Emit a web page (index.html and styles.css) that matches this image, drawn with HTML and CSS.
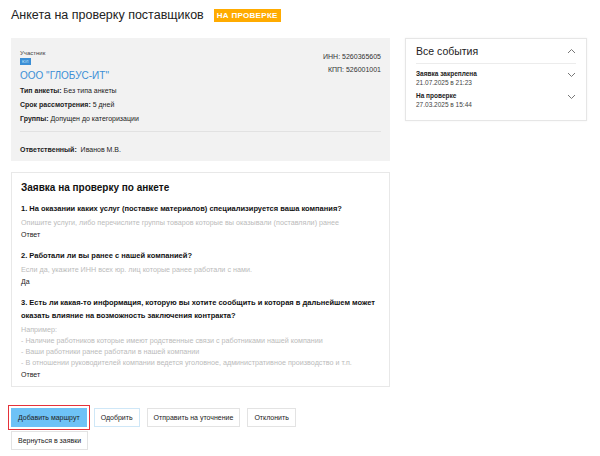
FILE: index.html
```html
<!DOCTYPE html>
<html lang="ru">
<head>
    <meta charset="UTF-8">
    <meta name="viewport" content="width=device-width, initial-scale=1.0">
    <title>Анкета на проверку поставщиков</title>
    <link rel="stylesheet" href="styles.css">
</head>
<body>
    <div class="header">
        <h1>Анкета на проверку поставщиков</h1>
        <span class="status-badge">НА ПРОВЕРКЕ</span>
    </div>

    <div class="layout">
        <div class="main">
            <div class="supplier-card">
                <div class="supplier-top">
                    <div>
                        <div class="label-small">Участник</div>
                        <span class="type-badge">ЮЛ</span>
                        <div class="company-name">ООО "ГЛОБУС-ИТ"</div>
                    </div>
                    <div class="requisites">
                        <div>ИНН: 5260365605</div>
                        <div>КПП: 526001001</div>
                    </div>
                </div>
                <div class="info-row"><b>Тип анкеты:</b> Без типа анкеты</div>
                <div class="info-row"><b>Срок рассмотрения:</b> 5 дней</div>
                <div class="info-row"><b>Группы:</b> Допущен до категоризации</div>
                <div class="responsible"><b>Ответственный:</b>&nbsp; Иванов М.В.</div>
            </div>

            <div class="questions-card">
                <h2>Заявка на проверку по анкете</h2>

                <div class="question">
                    <div class="question-title">1. На оказании каких услуг (поставке материалов) специализируется ваша компания?</div>
                    <div class="question-hint">Опишите услуги, либо перечислите группы товаров которые вы оказывали (поставляли) ранее</div>
                    <div class="question-answer">Ответ</div>
                </div>

                <div class="question">
                    <div class="question-title">2. Работали ли вы ранее с нашей компанией?</div>
                    <div class="question-hint">Если да, укажите ИНН всех юр. лиц которые ранее работали с нами.</div>
                    <div class="question-answer">Да</div>
                </div>

                <div class="question">
                    <div class="question-title">3. Есть ли какая-то информация, которую вы хотите сообщить и которая в дальнейшем может оказать влияние на возможность заключения контракта?</div>
                    <div class="question-hint">
                        Например:<br>
                        - Наличие работников которые имеют родственные связи с работниками нашей компании<br>
                        - Ваши работники ранее работали в нашей компании<br>
                        - В отношении руководителей компании ведется уголовное, административное производство и т.п.
                    </div>
                    <div class="question-answer">Ответ</div>
                </div>
            </div>
        </div>

        <div class="events-card">
            <div class="events-header">
                <span>Все события</span>
                <svg class="chevron" width="9" height="6" viewBox="0 0 9 6"><path d="M1 5 L4.5 1.5 L8 5" fill="none" stroke="#777" stroke-width="1"/></svg>
            </div>
            <div class="event">
                <div>
                    <div class="event-title">Заявка закреплена</div>
                    <div class="event-date">21.07.2025 в 21:23</div>
                </div>
                <svg class="chevron" width="9" height="6" viewBox="0 0 9 6"><path d="M1 1 L4.5 4.5 L8 1" fill="none" stroke="#777" stroke-width="1"/></svg>
            </div>
            <div class="event">
                <div>
                    <div class="event-title">На проверке</div>
                    <div class="event-date">27.03.2025 в 15:44</div>
                </div>
                <svg class="chevron" width="9" height="6" viewBox="0 0 9 6"><path d="M1 1 L4.5 4.5 L8 1" fill="none" stroke="#777" stroke-width="1"/></svg>
            </div>
        </div>
    </div>

    <div class="actions">
        <span class="highlight"><button class="btn btn-primary">Добавить маршрут</button></span>
        <button class="btn btn-approve">Одобрить</button>
        <button class="btn">Отправить на уточнение</button>
        <button class="btn">Отклонить</button>
        <button class="btn">Вернуться в заявки</button>
    </div>
</body>
</html>
```

FILE: styles.css
```css
body {
    font-family: "Liberation Sans", Arial, sans-serif;
    margin: 0;
    padding: 0 11px;
    background-color: #fff;
    color: #222;
    font-size: 7px;
}

.header {
    display: flex;
    align-items: center;
    gap: 10px;
    height: 30px;
}

h1 {
    font-size: 12.5px;
    font-weight: normal;
    margin: 0;
    color: #222;
}

.status-badge {
    background-color: #ffab00;
    color: #fff;
    font-weight: bold;
    font-size: 8px;
    letter-spacing: 0.3px;
    padding: 2px 3px;
}

.layout {
    display: flex;
    gap: 15px;
    margin-top: 8px;
    align-items: flex-start;
}

.main {
    width: 379px;
}

.supplier-card {
    background-color: #f2f2f2;
    padding: 12px 9px 7px;
}

.supplier-top {
    display: flex;
    justify-content: space-between;
}

.label-small {
    font-size: 6px;
    color: #444;
}

.type-badge {
    display: inline-block;
    background-color: #3b8fd6;
    color: #cfe6fa;
    font-size: 4px;
    padding: 1px 2px;
    margin-top: 2px;
}

.company-name {
    color: #3b8fd6;
    font-size: 10px;
    margin-top: 5px;
}

.requisites {
    text-align: right;
    color: #333;
    line-height: 13px;
}

.info-row {
    margin-top: 6px;
    line-height: 8px;
}

.info-row:first-of-type {
    margin-top: 4px;
}

.responsible {
    border-top: 1px solid #e2e2e2;
    margin-top: 8px;
    padding-top: 14px;
    line-height: 8px;
}

.questions-card {
    margin-top: 11px;
    border: 1px solid #e8e8e8;
    padding: 9px 9px 5px;
}

h2 {
    font-size: 10px;
    margin: 0 0 9px;
    color: #111;
}

.question {
    margin-bottom: 8px;
}

.question:last-child {
    margin-bottom: 0;
}

.question-title {
    font-weight: bold;
    font-size: 7.5px;
    line-height: 13px;
    color: #111;
}

.question-hint {
    color: #bbb;
    font-size: 7.2px;
    line-height: 11px;
    margin-top: 2px;
}

.question-answer {
    margin-top: 1px;
    line-height: 12px;
}

.events-card {
    width: 160px;
    border: 1px solid #e6e6e6;
    box-shadow: 0 0 2px rgba(0, 0, 0, 0.06);
    padding: 0 10px 6px;
}

.events-header {
    display: flex;
    justify-content: space-between;
    align-items: center;
    font-size: 10.5px;
    padding: 6px 0;
    border-bottom: 1px solid #ececec;
    margin-bottom: 6px;
}

.event {
    display: flex;
    justify-content: space-between;
    align-items: flex-start;
    margin-bottom: 5px;
}

.event-title {
    font-weight: bold;
    font-size: 6.5px;
    line-height: 8px;
}

.event-date {
    font-size: 6.5px;
    line-height: 8px;
    color: #444;
    margin-top: 1px;
}

.event .chevron {
    margin-top: 2px;
}

.actions {
    display: flex;
    flex-wrap: wrap;
    gap: 4px 7px;
    margin-top: 21px;
    width: 300px;
}

.btn {
    font-family: "Liberation Sans", Arial, sans-serif;
    font-size: 7px;
    background-color: #fff;
    color: #222;
    border: 1px solid #e3e3e3;
    padding: 4px 6px;
    height: 19px;
    cursor: pointer;
}

.highlight {
    outline: 1.5px solid #e5323a;
    outline-offset: 2px;
    display: inline-flex;
}

.btn-primary {
    background-color: #6ec2f6;
    border-color: #6ec2f6;
}

.btn-approve {
    border-color: #cfe7f7;
}
```
